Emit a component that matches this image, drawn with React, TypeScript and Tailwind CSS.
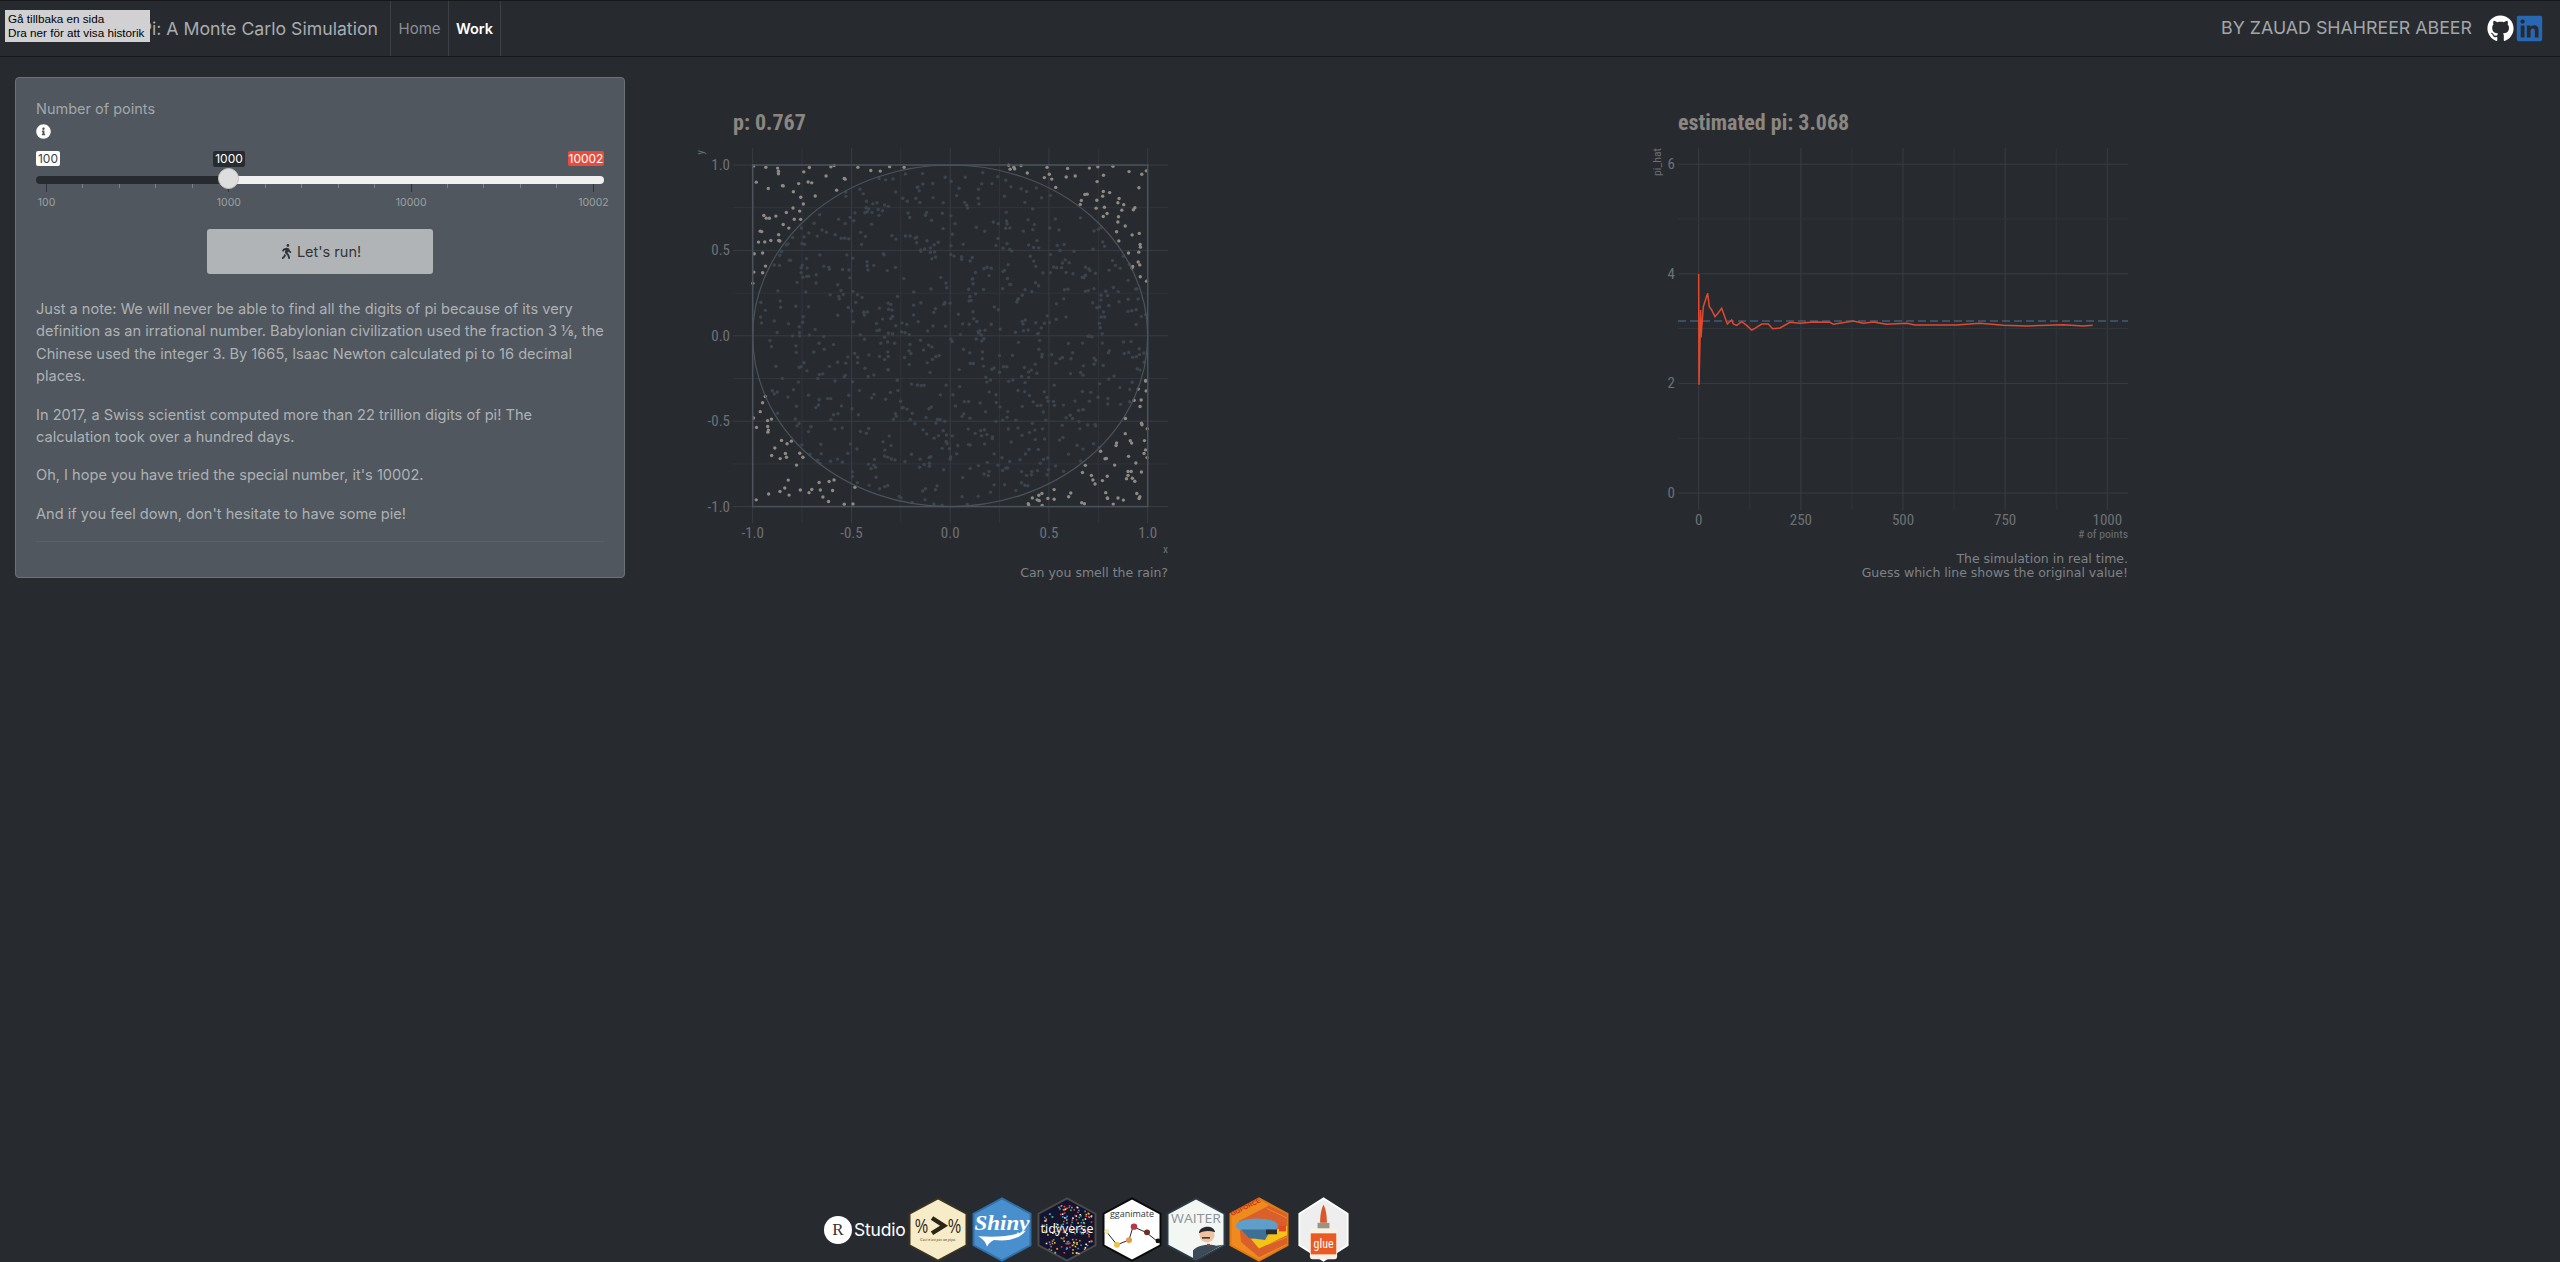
import { FaGithub, FaLinkedin, FaWalking, FaInfoCircle } from "react-icons/fa";

const condensed = "'Roboto Condensed','Liberation Sans Narrow',Roboto,sans-serif";

// seeded random so the picture stays the same on each load
const makeRandom = (seed: number) => () => {
  seed = (seed * 1664525 + 1013904223) % 4294967296;
  return seed / 4294967296;
};

const ScatterPlot = () => {
  const ox = 680;
  const oy = 135;
  const sx = (v: number) => 950.2 + v * 197.5 - ox;
  const sy = (v: number) => 335.8 - v * 170.8 - oy;
  const rnd = makeRandom(42);
  const points = Array.from({ length: 1000 }, () => [rnd() * 2 - 1, rnd() * 2 - 1]);
  const major = [-1, -0.5, 0, 0.5, 1];
  const minor = [-0.75, -0.25, 0.25, 0.75];

  return (
    <svg width="520" height="431" className="block">
      {minor.map((v) => (
        <g key={v} stroke="#31353b" strokeWidth="1">
          <line x1={sx(v)} x2={sx(v)} y1={13} y2={388} />
          <line x1={53} x2={488} y1={sy(v)} y2={sy(v)} />
        </g>
      ))}
      {major.map((v) => (
        <g key={v} stroke="#393d43" strokeWidth="1">
          <line x1={sx(v)} x2={sx(v)} y1={13} y2={388} />
          <line x1={53} x2={488} y1={sy(v)} y2={sy(v)} />
        </g>
      ))}
      {points.map(([x, y], i) => (
        <circle
          key={i}
          cx={sx(x)}
          cy={sy(y)}
          r="1.7"
          fill={x * x + y * y > 1 ? "#8e8a84" : "#3d444c"}
        />
      ))}
      <rect x={sx(-1)} y={sy(1)} width={395} height={341.6} fill="none" stroke="#4b525a" strokeWidth="1.5" />
      <ellipse cx={sx(0)} cy={sy(0)} rx={197.5} ry={170.8} fill="none" stroke="#4b525a" strokeWidth="1.2" />
      <g fill="#6d7175" fontSize="15" fontFamily={condensed}>
        {major.map((v) => (
          <text key={v} x={sx(v)} y={403} textAnchor="middle">
            {v.toFixed(1)}
          </text>
        ))}
        {major.map((v) => (
          <text key={v} x={50} y={sy(v) + 5} textAnchor="end">
            {v.toFixed(1)}
          </text>
        ))}
      </g>
      <g fill="#6d7175" fontSize="11.5" fontFamily={condensed}>
        <text x={488} y={418} textAnchor="end">x</text>
        <text transform="translate(24 15) rotate(-90)" textAnchor="end">y</text>
      </g>
    </svg>
  );
};

const linePoints = [
  [176, 552], [177, 884], [182, 660], [183, 742], [190, 650], [203, 610], [208, 650], [215, 660], [225, 680],
  [235, 668], [245, 655], [262, 702], [275, 690], [280, 702], [290, 706], [305, 695], [320, 706], [335, 720],
  [345, 715], [365, 702], [385, 702], [398, 716], [420, 714], [450, 697], [480, 700], [520, 696], [570, 697],
  [580, 703], [640, 693], [670, 700], [700, 696], [740, 703], [800, 700], [825, 705], [950, 705], [1020, 700],
  [1090, 706], [1160, 708], [1270, 704], [1330, 708], [1358, 706],
];

const LinePlot = () => {
  // the points above were read off a 3x crop starting at y=90, svg starts at y=135
  const d = linePoints.map(([x, y]) => `${x / 3},${y / 3 - 45}`).join(" ");
  const xs = [0, 250, 500, 750, 1000];
  const xAll = [0, 125, 250, 375, 500, 625, 750, 875, 1000];
  const sx = (v: number) => 58.7 + v * 0.4086;
  const sy = (v: number) => 358 - v * 54.8;

  return (
    <svg width="520" height="417" className="block">
      {xAll.map((v, i) => (
        <line key={v} x1={sx(v)} x2={sx(v)} y1={13} y2={375} stroke={i % 2 ? "#31353b" : "#393d43"} />
      ))}
      {[0, 1, 2, 3, 4, 5, 6].map((v) => (
        <line key={v} x1={38} x2={488} y1={sy(v)} y2={sy(v)} stroke={v % 2 ? "#31353b" : "#393d43"} />
      ))}
      <line x1={38} x2={488} y1={186} y2={186} stroke="#4e7596" strokeWidth="1.2" strokeDasharray="8 4" />
      <polyline points={d} fill="none" stroke="#e0492f" strokeWidth="1.5" />
      <g fill="#6d7175" fontSize="15" fontFamily={condensed}>
        {xs.map((v) => (
          <text key={v} x={sx(v)} y={390} textAnchor="middle">{v}</text>
        ))}
        {[0, 2, 4, 6].map((v) => (
          <text key={v} x={35} y={sy(v) + 5} textAnchor="end">{v}</text>
        ))}
      </g>
      <g fill="#6d7175" fontSize="11.7" fontFamily={condensed}>
        <text x={488} y={403} textAnchor="end"># of points</text>
        <text transform="translate(21 13) rotate(-90)" textAnchor="end">pi_hat</text>
      </g>
    </svg>
  );
};

const Hex = ({ fill, stroke, w = 60, children }: { fill: string; stroke: string; w?: number; children?: React.ReactNode }) => (
  <svg width={w} height="65" viewBox="0 0 60 68" preserveAspectRatio="none" className="block shrink-0">
    <polygon points="30,1.5 58.5,17.5 58.5,50.5 30,66.5 1.5,50.5 1.5,17.5" fill={fill} stroke={stroke} strokeWidth="2" />
    {children}
  </svg>
);

const TidyDots = () => {
  const rnd = makeRandom(7);
  const colors = ["#e8453c", "#f2c12e", "#3f9be8", "#ffffff", "#3fbf6b", "#e88a2e", "#e8453c"];
  const dots = Array.from({ length: 190 }, () => [6 + rnd() * 48, 6 + rnd() * 56, Math.floor(rnd() * 7)]);
  return (
    <>
      {dots
        .filter(([x, y]) => y > 4 + Math.abs(x - 30) * 0.5 && y < 64 - Math.abs(x - 30) * 0.5)
        .map(([x, y, c], i) => (
          <rect key={i} x={x} y={y} width="1.6" height="1.6" fill={colors[c]} />
        ))}
    </>
  );
};

const Logos = () => (
  <div className="flex items-start h-[65px] shrink-0 pl-[824px]">
    <div className="flex items-center h-[66px] w-[84px] shrink-0">
      <div className="w-[28px] h-[28px] rounded-full bg-white flex items-center justify-center text-[#333] text-[17px] font-['Liberation_Serif',serif]">
        R
      </div>
      <span className="ml-[2px] text-white text-[17.5px] tracking-[-0.2px] font-['Inter',sans-serif]">Studio</span>
    </div>
    <Hex fill="#f7ecc8" stroke="#3b3222">
      <g fontFamily="'Liberation Sans',sans-serif" fill="#2b2418">
        <text x="7" y="38" fontSize="22" textLength="13" lengthAdjust="spacingAndGlyphs">%</text>
        <text x="40" y="38" fontSize="22" textLength="13" lengthAdjust="spacingAndGlyphs">%</text>
      </g>
      <polyline points="24,22 36,30 24,38" fill="none" stroke="#2b2418" strokeWidth="4.5" />
      <text x="30" y="46" textAnchor="middle" fontSize="4" fontStyle="italic" fill="#4a4030" fontFamily="'Liberation Serif',serif">
        Ceci n'est pas un pipe.
      </text>
    </Hex>
    <div className="ml-[4px]">
      <Hex fill="#4a8fcd" stroke="#2f70a9">
        <text x="30" y="35" textAnchor="middle" fontSize="23" fontStyle="italic" fontWeight="700" fill="#fff" fontFamily="'Liberation Serif',serif">
          Shiny
        </text>
        <path d="M6 41 C22 42 40 42 54 35 C46 46 32 46 22 45 C18 47 16 50 15 52 C14 47 10 43 6 41Z" fill="#fff" />
      </Hex>
    </div>
    <div className="ml-[5px]">
      <Hex fill="#15142f" stroke="#4a4a4a">
        <TidyDots />
        <text x="30" y="38" textAnchor="middle" fontSize="12.5" fill="#fff" fontFamily="'Open Sans',sans-serif">
          tidyverse
        </text>
      </Hex>
    </div>
    <div className="ml-[5px]">
      <Hex fill="#ffffff" stroke="#0a0a0a">
        <text x="30" y="21" textAnchor="middle" fontSize="9" fill="#333" fontFamily="'Open Sans',sans-serif">
          gganimate
        </text>
        <polyline points="5,37 15,50 27,45 31,31 44,37 55,46" fill="none" stroke="#222" strokeWidth="1" />
        <circle cx="5" cy="36" r="2.5" fill="#f6e9a8" />
        <circle cx="15" cy="50" r="3" fill="#e9c44a" />
        <circle cx="27" cy="45" r="3" fill="#e39a4e" />
        <circle cx="32" cy="31" r="3.3" fill="#b23a48" />
        <circle cx="45" cy="37" r="3" fill="#6b3028" />
        <circle cx="56" cy="46" r="2.5" fill="#111" />
      </Hex>
    </div>
    <div className="ml-[4px]">
      <Hex fill="#f2f7f4" stroke="#2d3a45">
        <text x="30" y="27" textAnchor="middle" fontSize="14" fill="#8c9296" fontFamily="'Open Sans',sans-serif">
          WAITER
        </text>
        <path d="M27 66 L27 56 C32 50 44 49 50 51 L57 50 L30 66Z" fill="#3d4a57" />
        <circle cx="41" cy="40" r="7.5" fill="#f0c3a0" />
        <path d="M33 38 C33 29 49 29 49 37 C44 35 38 35 33 38Z" fill="#27272c" />
        <rect x="36" y="42" width="8" height="1.5" fill="#27272c" />
        <rect x="41" y="49" width="3" height="2" fill="#c0392b" />
      </Hex>
    </div>
    <div className="ml-[3px]">
      <Hex fill="#ef8b1e" stroke="#e07a12">
        <polygon points="10,25 40,9 58,18 58,49 30,63 12,47" fill="#d9602a" />
        <g stroke="#ef8b1e" strokeWidth="1">
          <line x1="38" y1="12" x2="58" y2="22" />
          <line x1="46" y1="44" x2="58" y2="38" />
          <line x1="38" y1="50" x2="58" y2="42" />
        </g>
        <polygon points="22,44 58,30 58,40 30,54" fill="#f3c317" />
        <text x="3" y="20" fontSize="6.5" fontWeight="700" fill="#c8321f" transform="rotate(-27 3 20)" fontFamily="'Liberation Sans',sans-serif">
          GGFORCE
        </text>
        <ellipse cx="28" cy="30" rx="21" ry="7.5" fill="#5f9ec9" />
        <path d="M12 34 L42 34 L36 45 L20 43Z" fill="#3f6f93" />
        <rect x="37" y="34" width="11" height="5" fill="#2a2d33" />
        <rect x="50" y="30" width="7" height="6" fill="#e8452a" />
      </Hex>
    </div>
    <div className="ml-[9px]">
      <Hex fill="#eeeeee" stroke="#ffffff" w={51}>
        <path d="M26 27 C26 17 28 11 30 8 C32 11 34 17 34 27Z" fill="#d9572b" />
        <rect x="23" y="27" width="14" height="6" fill="#9a9582" />
        <rect x="14" y="33" width="32" height="32" rx="3" fill="#f7f1e3" />
        <rect x="15" y="38" width="30" height="22" fill="#ec5a24" />
        <text x="30" y="53" textAnchor="middle" fontSize="14" fill="#fff" fontFamily={condensed}>
          glue
        </text>
      </Hex>
    </div>
  </div>
);

const Slider = () => {
  const ticks = Array.from({ length: 16 }, (_, i) => i);
  return (
    <div className="relative mt-[12px]">
      <div className="flex justify-between items-start h-[15px] text-[12px] leading-[15px]">
        <div className="h-[15px] w-[24px] rounded-[2px] bg-white text-[#3a3f45] text-center">100</div>
        <div className="h-[15px] w-[36px] rounded-[2px] bg-[#e74c3c] text-white text-center">10002</div>
      </div>
      <div className="absolute left-[177px] top-0 h-[16px] w-[32px] rounded-[2px] bg-[#272b30] text-white text-[12px] leading-[16px] text-center">
        1000
      </div>
      <div className="flex mt-[10px] h-[8px]">
        <div className="w-[193px] rounded-l-full bg-[#272b30]" />
        <div className="flex-1 rounded-r-full bg-[#f0f0f0]" />
      </div>
      <div className="absolute left-[182px] top-[17px] w-[21px] h-[21px] rounded-full bg-[#dedede] border border-[#c4c6c8]" />
      <div className="flex justify-between mx-[10px]">
        {ticks.map((i) => (
          <div key={i} className={i % 5 === 0 ? "w-px h-[8px] bg-[#30343a]" : "w-px h-[4px] bg-[#7c8186]"} />
        ))}
      </div>
      <div className="flex justify-between mx-[10px] mt-[4px] text-[10.5px] leading-[13px] text-[#9ba0a4]">
        {["100", "1000", "10000", "10002"].map((t) => (
          <div key={t} className="w-px flex justify-center">
            <span>{t}</span>
          </div>
        ))}
      </div>
    </div>
  );
};

const App = () => {
  return (
    <div className="relative h-screen flex flex-col bg-[#272b30] overflow-hidden font-['Inter',sans-serif]">
      <div className="flex h-[57px] shrink-0 border-y border-[#15171a] bg-[#272b30]">
        <div className="w-[390px] pr-[12px] text-right text-[17.7px] leading-[55px] text-[#a9adb0] whitespace-nowrap">
          Estimating Pi: A Monte Carlo Simulation
        </div>
        <div className="w-[59px] border-x border-[#3c4046] text-center text-[15px] leading-[55px] text-[#8b8f93]">Home</div>
        <div className="w-[52px] border-r border-[#3c4046] text-center text-[14.5px] leading-[55px] font-semibold text-white">Work</div>
        <div className="flex-1 flex justify-end items-center pr-[16px]">
          <span className="text-[17.8px] text-[#a3a6a9] mr-[15px] whitespace-nowrap">BY ZAUAD SHAHREER ABEER</span>
          <FaGithub className="text-white text-[27px]" />
          <FaLinkedin className="text-[#2867b2] text-[29px] ml-[1px]" />
        </div>
      </div>

      {/* browser back-button tooltip sitting over the title */}
      <div className="absolute left-[5px] top-[10px] w-[145px] h-[32px] bg-[#d1d1d3] px-[3px] text-black text-[11.7px] leading-[14px] pt-[2px] whitespace-nowrap font-['Liberation_Sans',sans-serif]">
        <div>Gå tillbaka en sida</div>
        <div>Dra ner för att visa historik</div>
      </div>

      <div className="flex-1 flex items-start">
        <div className="mt-[20px] ml-[15px] w-[610px] h-[501px] shrink-0 rounded-[4px] border border-[#6b7177] bg-[#50575e] px-[20px] pt-[20px]">
          <div className="text-[14.5px] leading-[22px] text-[#a2a7ab]">Number of points</div>
          <FaInfoCircle className="mt-[4px] text-white text-[15px] ml-0" />
          <Slider />
          <div className="mt-[20px] mx-auto w-[226px] h-[45px] rounded-[3px] bg-[#b0b4b7] flex items-center justify-center gap-[3px] text-[#30343a] text-[14.5px]">
            <FaWalking className="text-[15px]" />
            <span>Let's run!</span>
          </div>
          <div className="mt-[24px] text-[14.6px] leading-[22.4px] text-[#aeb2b5] flex flex-col gap-[16px]">
            <p>
              Just a note: We will never be able to find all the digits of pi because of its very definition as an
              irrational number. Babylonian civilization used the fraction 3 ⅛, the Chinese used the integer 3. By
              1665, Isaac Newton calculated pi to 16 decimal places.
            </p>
            <p>In 2017, a Swiss scientist computed more than 22 trillion digits of pi! The calculation took over a hundred days.</p>
            <p>Oh, I hope you have tried the special number, it's 10002.</p>
            <p>And if you feel down, don't hesitate to have some pie!</p>
          </div>
          <div className="mt-[16px] border-t border-[#5a6168]" />
        </div>

        <div className="ml-[55px] w-[520px] shrink-0 pt-[52px]">
          <div className="pl-[53px] h-[26px] text-[22px] leading-[28px] font-bold text-[#8b8680] font-['Roboto_Condensed','Liberation_Sans_Narrow',Roboto,sans-serif]">p: 0.767</div>
          <ScatterPlot />
          <div className="pr-[32px] text-right text-[12.5px] leading-[14px] text-[#7f8286] font-['DejaVu_Sans',sans-serif]">Can you smell the rain?</div>
        </div>

        <div className="ml-[440px] w-[520px] shrink-0 pt-[52px]">
          <div className="pl-[38px] h-[26px] text-[22px] leading-[28px] font-bold text-[#8b8680] font-['Roboto_Condensed','Liberation_Sans_Narrow',Roboto,sans-serif]">estimated pi: 3.068</div>
          <LinePlot />
          <div className="pr-[32px] text-right text-[12.5px] leading-[14px] text-[#7f8286] font-['DejaVu_Sans',sans-serif]">
            <div>The simulation in real time.</div>
            <div>Guess which line shows the original value!</div>
          </div>
        </div>
      </div>

      <Logos />
    </div>
  );
};

export default App;
